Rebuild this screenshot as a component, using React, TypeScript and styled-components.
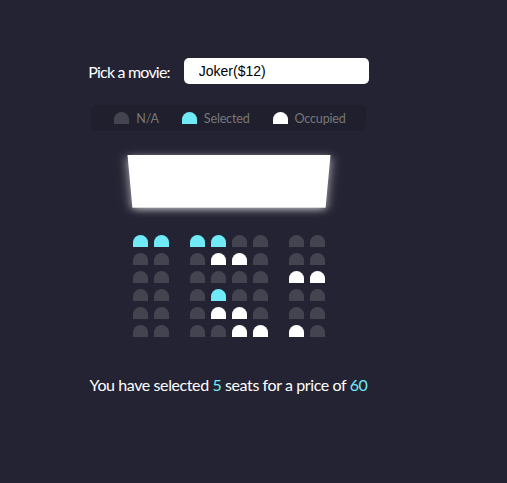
import React, { useState } from "react";
import styled, { createGlobalStyle, css } from "styled-components";

const GlobalStyle = createGlobalStyle`
  * { box-sizing: border-box; }
  html, body { margin: 0; padding: 0; }
  body {
    background: #242333;
    color: #fff;
    font-family: Lato, "Noto Sans", sans-serif;
    height: 483px;
    overflow: hidden;
  }
`;

const Page = styled.div`
  width: 457px;
  display: flex;
  flex-direction: column;
  align-items: center;
  padding-top: 58px;
`;

const MovieRow = styled.div`
  display: flex;
  align-items: center;
  gap: 14px;
  height: 26px;
  font-size: 16px;
`;

const Label = styled.label`
  color: #fff;
  letter-spacing: -0.8px;
`;

const Select = styled.select`
  appearance: none;
  -webkit-appearance: none;
  background: #fff;
  border: 0;
  border-radius: 5px;
  font-family: "Liberation Sans", Arial, sans-serif;
  font-size: 14px;
  color: #000;
  width: 185px;
  height: 26px;
  padding: 5px 15px;
  outline: none;
`;

const Showcase = styled.ul`
  list-style: none;
  margin: 21px 0 0;
  padding: 0 10px;
  height: 26px;
  display: flex;
  align-items: center;
  background: rgba(0, 0, 0, 0.1);
  border-radius: 5px;
  color: #777;
`;

const LegendItem = styled.li`
  display: flex;
  align-items: center;
  margin: 0 10px;
`;

const LegendText = styled.small`
  font-size: 12.6px;
  margin-left: 4px;
  letter-spacing: -0.2px;
`;

type SeatState = "na" | "selected" | "occupied";

const Seat = styled.div<{ $state: SeatState }>`
  width: 15px;
  height: 12px;
  margin: 3px;
  border-top-left-radius: 10px;
  border-top-right-radius: 10px;
  background: ${(p) =>
    p.$state === "selected" ? "#6feaf6" : p.$state === "occupied" ? "#fff" : "#444451"};
`;

const SeatButton = styled(Seat)<{ $clickable: boolean }>`
  ${(p) =>
    p.$clickable &&
    css`
      cursor: pointer;
    `}
  &:nth-of-type(2) {
    margin-right: 18px;
  }
  &:nth-last-of-type(2) {
    margin-left: 18px;
  }
`;

const Theatre = styled.div`
  perspective: 1000px;
  margin-top: 16px;
  display: flex;
  flex-direction: column;
  align-items: center;
`;

const Screen = styled.div`
  background: #fff;
  height: 70px;
  width: 198px;
  margin: 0 0 15px;
  transform: rotateX(-45deg);
  box-shadow: 0 3px 10px rgba(255, 255, 255, 0.7);
`;

const Row = styled.div`
  display: flex;
`;

const Summary = styled.p`
  margin: 35px 0 0;
  font-size: 16px;
  color: #fff;
  letter-spacing: -0.4px;
`;

const Highlight = styled.span`
  color: #6feaf6;
`;

const initial: SeatState[][] = [
  ["selected", "selected", "selected", "selected", "na", "na", "na", "na"],
  ["na", "na", "na", "occupied", "occupied", "na", "na", "na"],
  ["na", "na", "na", "na", "na", "na", "occupied", "occupied"],
  ["na", "na", "na", "selected", "na", "na", "na", "na"],
  ["na", "na", "na", "occupied", "occupied", "na", "na", "na"],
  ["na", "na", "na", "na", "occupied", "occupied", "occupied", "na"],
];

export default function App() {
  const [seats, setSeats] = useState<SeatState[][]>(initial);
  const [price, setPrice] = useState(12);

  const toggle = (r: number, c: number) => {
    setSeats((prev) =>
      prev.map((row, ri) =>
        row.map((s, ci) => {
          if (ri !== r || ci !== c || s === "occupied") return s;
          return s === "selected" ? "na" : "selected";
        })
      )
    );
  };

  const count = seats.flat().filter((s) => s === "selected").length;

  return (
    <>
      <GlobalStyle />
      <Page>
        <MovieRow>
          <Label htmlFor="movie">Pick a movie:</Label>
          <Select id="movie" value={price} onChange={(e) => setPrice(Number(e.target.value))}>
            <option value={12}>Joker($12)</option>
            <option value={10}>Avengers: Endgame($10)</option>
            <option value={8}>Toy Story 4($8)</option>
            <option value={9}>The Lion King($9)</option>
          </Select>
        </MovieRow>
        <Showcase>
          <LegendItem>
            <Seat $state="na" />
            <LegendText>N/A</LegendText>
          </LegendItem>
          <LegendItem>
            <Seat $state="selected" />
            <LegendText>Selected</LegendText>
          </LegendItem>
          <LegendItem>
            <Seat $state="occupied" />
            <LegendText>Occupied</LegendText>
          </LegendItem>
        </Showcase>
        <Theatre>
          <Screen />
          {seats.map((row, r) => (
            <Row key={r}>
              {row.map((s, c) => (
                <SeatButton
                  key={c}
                  $state={s}
                  $clickable={s !== "occupied"}
                  onClick={() => toggle(r, c)}
                />
              ))}
            </Row>
          ))}
        </Theatre>
        <Summary>
          You have selected <Highlight>{count}</Highlight> seats for a price of{" "}
          <Highlight>{count * price}</Highlight>
        </Summary>
      </Page>
    </>
  );
}
